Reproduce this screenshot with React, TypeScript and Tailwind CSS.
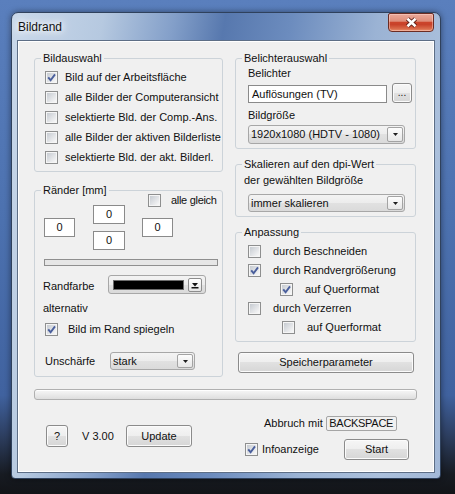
import type { ReactNode } from 'react'

const bildauswahl: [boolean, string][] = [
  [true, 'Bild auf der Arbeitsfläche'],
  [false, 'alle Bilder der Computeransicht'],
  [false, 'selektierte Bld. der Comp.-Ans.'],
  [false, 'alle Bilder der aktiven Bilderliste'],
  [false, 'selektierte Bld. der akt. Bilderl.'],
]

const anpassung = [
  { pad: 'pl-[12px]', checked: false, label: 'durch Beschneiden' },
  { pad: 'pl-[12px]', checked: true, label: 'durch Randvergrößerung' },
  { pad: 'pl-[44px]', checked: true, label: 'auf Querformat' },
  { pad: 'pl-[12px]', checked: false, label: 'durch Verzerren' },
  { pad: 'pl-[46px]', checked: false, label: 'auf Querformat' },
]

function Check({ checked = false }: { checked?: boolean }) {
  return (
    <span className="relative flex h-[13px] w-[13px] shrink-0 border border-[#8e8f8f] bg-[#f5f5f5] p-[1px]">
      <span className="h-full w-full bg-[linear-gradient(135deg,#c6cbd1_0%,#e2e4e7_55%,#f8f8f8_100%)]" />
      {checked && (
        <svg className="absolute inset-0" width="11" height="11" viewBox="0 0 11 11">
          <path d="M2.2 5.4 L4.6 8.2 L9 2.4" fill="none" stroke="#4a5f9c" strokeWidth="1.9" />
        </svg>
      )}
    </span>
  )
}

function Group({ title, className = '', children }: { title: string; className?: string; children?: ReactNode }) {
  return (
    <div className={`rounded-[3px] border border-[#ccd3d9] ${className}`}>
      <div className="-mt-[7px] ml-[6px] w-fit bg-[#f0f0f0] px-[2px] leading-[13px]">{title}</div>
      {children}
    </div>
  )
}

function Btn({ className = '', children }: { className?: string; children?: ReactNode }) {
  return (
    <button
      type="button"
      className={`flex items-center justify-center rounded-[3px] border border-[#8b8b8b] bg-[linear-gradient(to_bottom,#f6f6f6_0%,#eeeeee_50%,#e1e1e1_50%,#d6d6d6_100%)] leading-[13px] shadow-[inset_0_0_0_1px_#fbfbfb] ${className}`}
    >
      {children}
    </button>
  )
}

function Arrow() {
  return (
    <span className="flex h-[calc(100%-2px)] w-[16px] items-center justify-center rounded-[2px] border border-[#a3a3a3] bg-[linear-gradient(to_bottom,#fdfdfd,#e7e7e7)]">
      <svg width="5" height="3" viewBox="0 0 5 3">
        <path d="M0 0h5L2.5 3z" fill="#1e1e1e" />
      </svg>
    </span>
  )
}

function Combo({ text, className = '' }: { text: string; className?: string }) {
  return (
    <div
      className={`flex items-center rounded-[3px] border border-[#a7a7a7] bg-[linear-gradient(to_bottom,#f3f3f3_0%,#ececec_50%,#e1e1e1_50%,#dadada_100%)] pl-[2px] pr-[1px] ${className}`}
    >
      <span className="flex-1 truncate">{text}</span>
      <Arrow />
    </div>
  )
}

function NumBox({ className = '' }: { className?: string }) {
  return (
    <div className={`flex h-[19px] items-center justify-center border border-[#8a8a8a] bg-white ${className}`}>0</div>
  )
}

export default function App() {
  return (
    <div className="h-screen w-full overflow-hidden bg-[linear-gradient(to_bottom,#5a7fbd_0%,#4c71af_45%,#40629f_80%,#2b3b5a_89%,#171b22_96%,#121418_100%)] pl-[11px] pt-[12px] font-['Liberation_Sans',Arial,sans-serif] text-[11px] leading-[13px] text-[#111]">
      <div className="flex h-[467px] w-[430px] flex-col rounded-t-[7px] rounded-b-[4px] border border-[#2f415c] bg-[linear-gradient(100deg,#c9d8ea_0%,#b6c9e0_18%,#839fc9_32%,#5778ae_42%,#6c8cbe_55%,#9bb3d4_72%,#abc0dc_88%,#a2b8d7_100%)] px-[5px] pb-[5px] shadow-[0_0_6px_rgba(0,0,0,0.45)]">
        {/* title bar */}
        <div className="flex h-[27px] items-start justify-between">
          <span className="ml-[1px] self-center pt-[1px] text-[12px] leading-[14px] [text-shadow:0_0_6px_#fff,0_0_10px_#fff,0_0_14px_#fff]">
            Bildrand
          </span>
          <div className="mr-[1px] flex h-[19px] w-[46px] items-center justify-center rounded-t-[2px] rounded-b-[4px] border border-[#6b2c23] bg-[linear-gradient(to_bottom,#eaa99a_0%,#df8e7a_42%,#cb442b_50%,#c8422a_62%,#d86848_85%,#e8906f_100%)] shadow-[inset_0_0_0_1px_rgba(255,220,210,0.45)]">
            <svg width="13" height="11" viewBox="0 0 13 11">
              <path d="M2.5 1.8 L10.5 9.2 M10.5 1.8 L2.5 9.2" stroke="#5b1d15" strokeWidth="4.4" />
              <path d="M2.5 1.8 L10.5 9.2 M10.5 1.8 L2.5 9.2" stroke="#ffffff" strokeWidth="2.6" />
            </svg>
          </div>
        </div>

        {/* client area */}
        <div className="flex flex-1 flex-col border border-[#5d6e86] bg-[#f0f0f0] shadow-[inset_0_0_0_1px_#ffffff]">
          <div className="flex gap-[12px] pl-[16px] pt-[17px]">
            {/* left column */}
            <div className="flex w-[189px] flex-col">
              <Group title="Bildauswahl" className="h-[114px]">
                <div className="flex flex-col pl-[10px] pt-[2px]">
                  {bildauswahl.map(([checked, label]) => (
                    <div key={label} className="flex h-[20px] items-center gap-[7px]">
                      <Check checked={checked} />
                      <span className="whitespace-nowrap">{label}</span>
                    </div>
                  ))}
                </div>
              </Group>

              <Group title="Ränder [mm]" className="mt-[18px] h-[187px]">
                <div className="-mt-[4px] flex h-[14px] items-center gap-[10px] pl-[113px]">
                  <Check />
                  <span className="tracking-[-0.3px]">alle gleich</span>
                </div>
                <div className="-mt-[2px] flex items-center pl-[9px]">
                  <NumBox className="w-[31px]" />
                  <div className="ml-[18px] flex flex-col gap-[7px]">
                    <NumBox className="w-[32px]" />
                    <NumBox className="w-[32px]" />
                  </div>
                  <NumBox className="ml-[17px] w-[31px]" />
                </div>
                <div className="ml-[9px] mt-[9px] h-[7px] w-[174px] border border-[#8f8f8f] bg-[#e6e6e6]" />
                <div className="mt-[9px] flex h-[19px] items-center">
                  <span className="w-[73px] pl-[8px] pt-[3px]">Randfarbe</span>
                  <div className="flex h-[19px] w-[98px] items-center rounded-[3px] border border-[#a7a7a7] bg-[linear-gradient(to_bottom,#f3f3f3_0%,#ececec_50%,#e1e1e1_50%,#dadada_100%)] pl-[4px] pr-[3px]">
                    <span className="h-[10px] w-[71px] border border-[#6d6d6d] bg-black" />
                    <span className="ml-auto flex h-[14px] w-[14px] items-center justify-center rounded-[2px] border border-[#8d8d8d] bg-[linear-gradient(to_bottom,#ffffff,#e4e4e4)]">
                      <svg width="8" height="8" viewBox="0 0 8 8">
                        <path d="M1 2h6L4 5.5z" fill="#111" />
                        <rect x="0.5" y="6" width="7" height="1.5" fill="#111" />
                      </svg>
                    </span>
                  </div>
                </div>
                <div className="mt-[4px] flex h-[20px] items-center pl-[8px]">alternativ</div>
                <div className="mt-[1px] flex h-[20px] items-center gap-[10px] pl-[10px]">
                  <Check checked />
                  <span>Bild im Rand spiegeln</span>
                </div>
                <div className="mt-[13px] flex h-[18px] items-center">
                  <span className="w-[75px] pl-[10px]">Unschärfe</span>
                  <Combo text="stark" className="h-[18px] w-[85px]" />
                </div>
              </Group>
            </div>

            {/* right column */}
            <div className="flex w-[181px] flex-col">
              <Group title="Belichterauswahl" className="h-[91px]">
                <div className="mt-[1px] flex h-[14px] items-center pl-[12px]">Belichter</div>
                <div className="mt-[3px] flex h-[20px] items-end gap-[5px] pl-[12px]">
                  <div className="flex h-[18px] w-[139px] items-center border border-[#8a8a8a] bg-white pl-[3px]">
                    Auflösungen (TV)
                  </div>
                  <Btn className="h-[20px] w-[20px] items-end pb-[3px] text-[10px] leading-[10px]">...</Btn>
                </div>
                <div className="mt-[5px] flex h-[14px] items-center pl-[12px]">Bildgröße</div>
                <div className="mt-[3px] pl-[12px]">
                  <Combo text="1920x1080 (HDTV - 1080)" className="h-[19px] w-[157px]" />
                </div>
              </Group>

              <Group title="Skalieren auf den dpi-Wert" className="mt-[15px] h-[53px]">
                <div className="mt-[2px] flex h-[14px] items-center pl-[8px]">der gewählten Bildgröße</div>
                <div className="mt-[7px] pl-[12px]">
                  <Combo text="immer skalieren" className="h-[18px] w-[157px]" />
                </div>
              </Group>

              <Group title="Anpassung" className="mt-[15px] h-[110px]">
                <div className="mt-[3px] flex flex-col">
                  {anpassung.map((r, i) => (
                    <div key={i} className={`flex h-[19px] items-center gap-[12px] ${r.pad}`}>
                      <Check checked={r.checked} />
                      <span>{r.label}</span>
                    </div>
                  ))}
                </div>
              </Group>

              <Btn className="ml-[3px] mt-[10px] h-[21px] w-[176px]">Speicherparameter</Btn>
            </div>
          </div>

          {/* progress bar */}
          <div className="ml-[16px] mt-[12px] h-[11px] w-[383px] rounded-[3px] border border-[#b0b0b0] bg-[linear-gradient(to_bottom,#f7f7f7_0%,#ebebeb_50%,#dedede_100%)] shadow-[inset_0_1px_0_#ffffff]" />

          {/* bottom row */}
          <div className="flex">
            <div className="ml-[28px] mt-[25px] flex h-[22px] items-center">
              <Btn className="h-[22px] w-[22px]">?</Btn>
              <span className="ml-[14px] w-[44px]">V 3.00</span>
              <Btn className="h-[22px] w-[66px]">Update</Btn>
            </div>
            <div className="ml-[53px] flex w-[164px] flex-col">
              <div className="mt-[16px] flex h-[15px] items-center gap-[3px] pl-[19px]">
                <span>Abbruch mit</span>
                <span className="flex h-[15px] w-[71px] items-center justify-center rounded-[2px] border border-[#a5a5a5] tracking-[-0.3px]">
                  BACKSPACE
                </span>
              </div>
              <div className="mt-[8px] flex h-[21px] items-center">
                <Check checked />
                <span className="ml-[4px]">Infoanzeige</span>
                <Btn className="ml-auto h-[21px] w-[65px]">Start</Btn>
              </div>
            </div>
          </div>
        </div>
      </div>
    </div>
  )
}
